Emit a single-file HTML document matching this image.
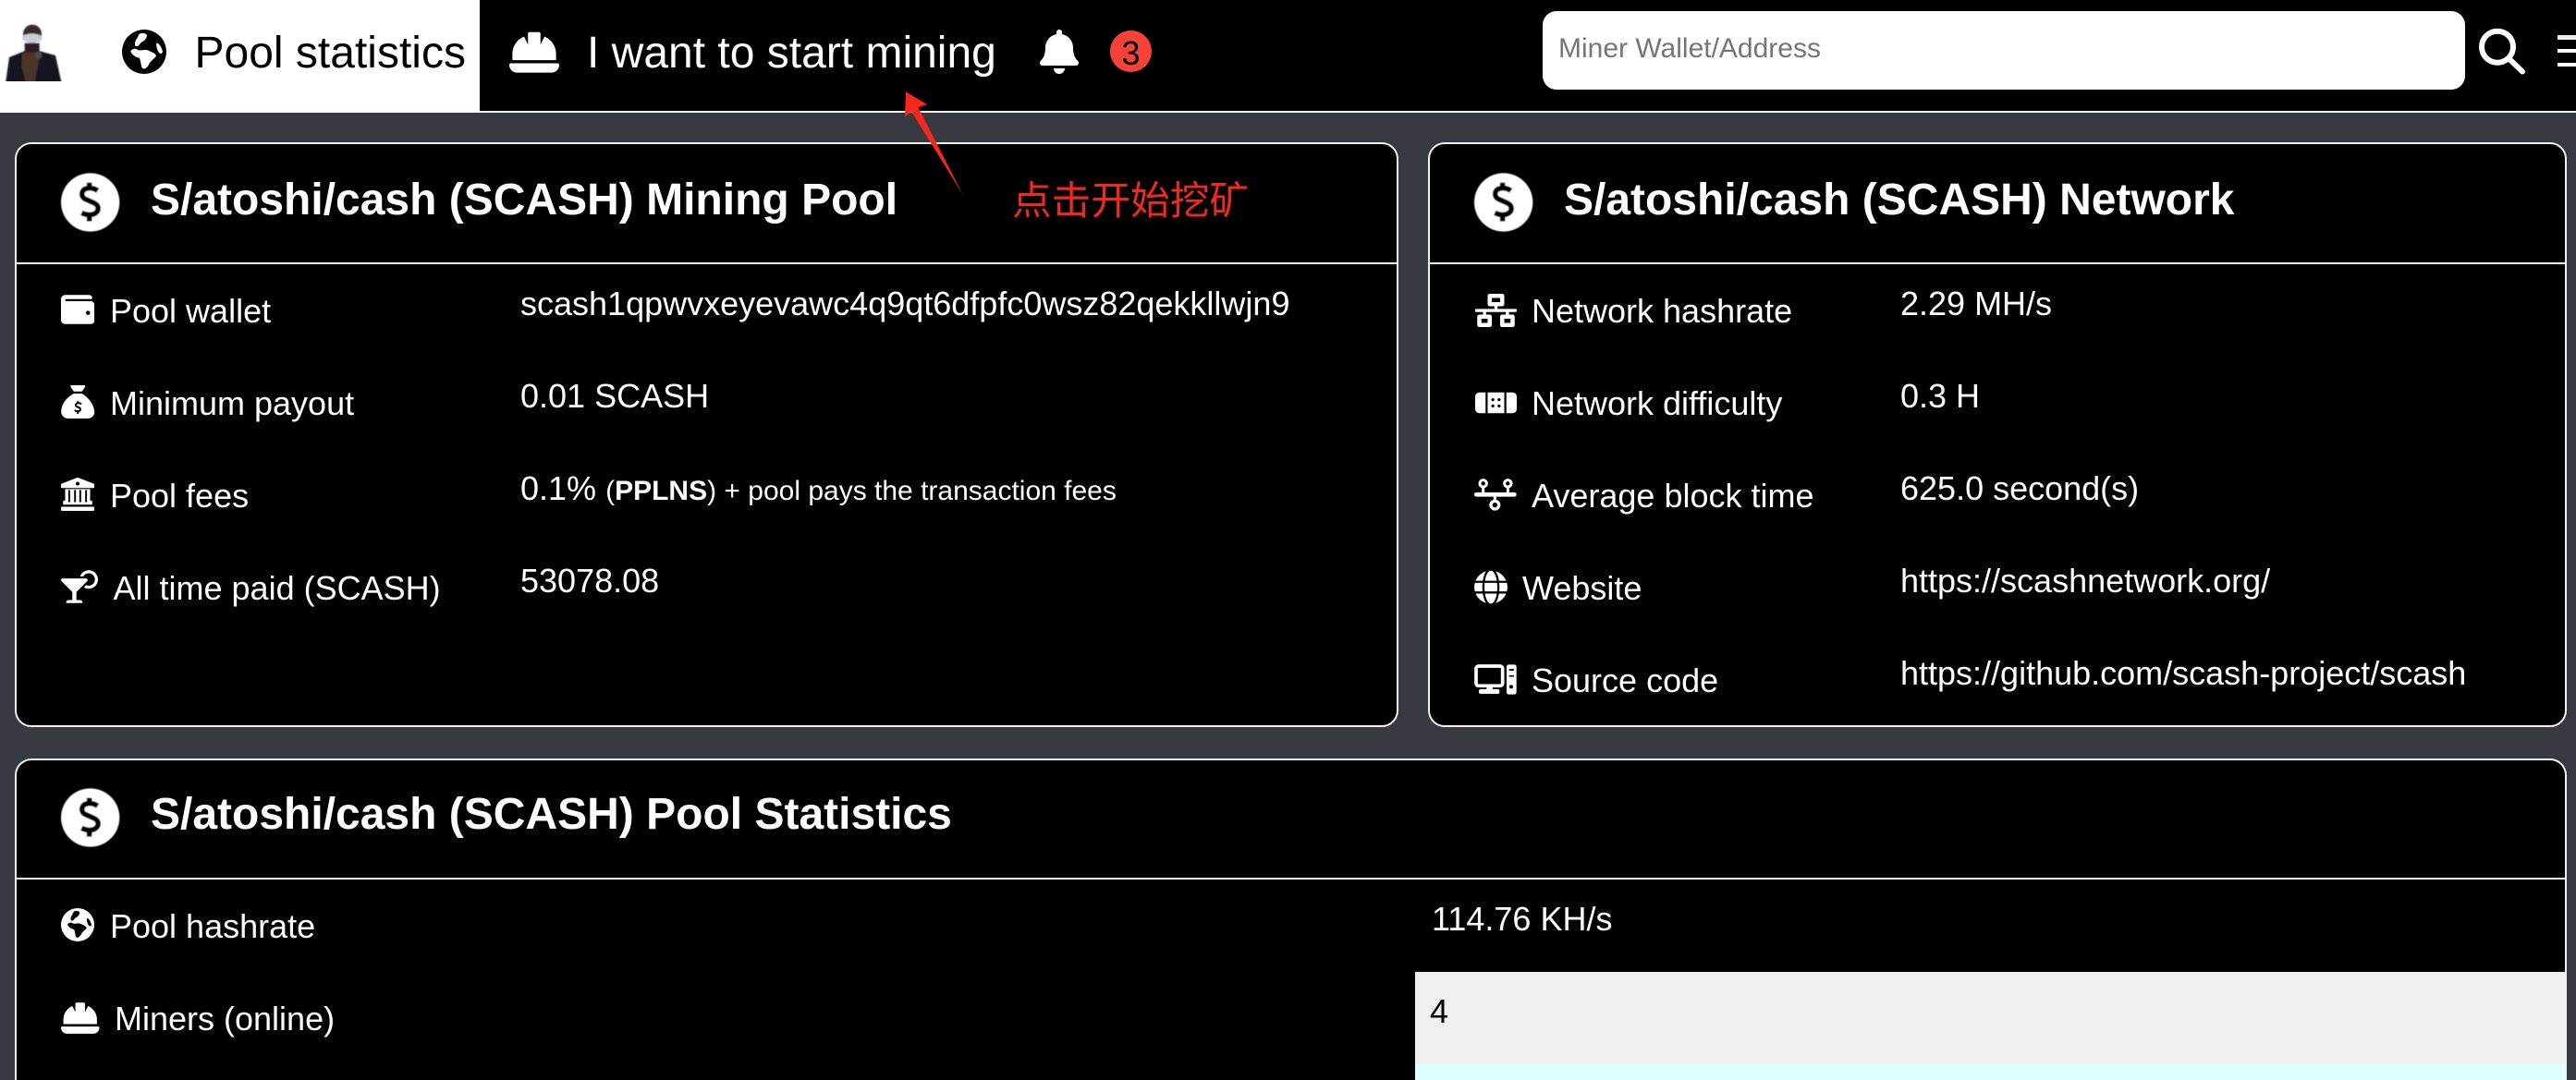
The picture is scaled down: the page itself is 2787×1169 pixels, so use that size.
<!DOCTYPE html>
<html lang="en">
<head>
<meta charset="utf-8">
<title>S/atoshi/cash Mining Pool</title>
<style>
html,body{margin:0;padding:0;width:2787px;height:1169px;overflow:hidden;background:#373b41}
body{position:relative;font-family:"Liberation Sans","Noto Sans CJK SC",sans-serif;color:#fff}
.bar{position:absolute;left:0;top:0;width:2787px;height:122px;background:#000;border-bottom:0}
.line{position:absolute;left:0;top:119.5px;width:2787px;height:2.5px;background:#f4f4f4}
.tab{position:absolute;left:0;top:0;width:519px;height:122px;background:#fff}
.card{position:absolute;box-sizing:border-box;background:#000;border:2px solid #f0f0f0;border-radius:18px}
.div{position:absolute;height:2px;background:#f0f0f0}
.t{position:absolute;white-space:nowrap;line-height:1;font-size:36px;color:#fff}
.h{font-size:48px;font-weight:bold}
.n{font-size:48px}
.i{position:absolute;fill:#fff;display:block}
.s{font-size:30px}
</style>
</head>
<body>
<svg width="0" height="0" style="position:absolute">
<defs>
<filter id="b" x="-10%" y="-10%" width="120%" height="120%"><feGaussianBlur stdDeviation="1.6"/></filter>
<filter id="c" x="-10%" y="-10%" width="120%" height="120%"><feGaussianBlur stdDeviation="2"/></filter>
<symbol id="dollar" viewBox="0 0 270 240">
<g filter="url(#b)">
<circle cx="128" cy="120" r="95" fill="#fff"/>
<path d="M152 82C140 74 125 72 113 76C97 82 97 104 113 110L140 122C158 130 158 150 140 158C127 163 112 160 100 154M125 56V74M125 162V182" fill="none" stroke="#000" stroke-width="17"/>
</g>
</symbol>
<symbol id="gl" viewBox="396 96 144 144"><path fill-rule="evenodd" d="M468 96a72 72 0 1 0 0 144a72 72 0 1 0 0-144zM452 110C462 106 474 108 477 114C476 126 468 134 458 138L448 150L440 150C436 145 438 132 445 124ZM444 160C452 168 470 158 482 164C492 170 504 172 507 182C500 192 488 198 484 208C478 220 470 226 462 222C456 212 458 198 452 188C440 186 426 176 424 166C428 160 438 156 444 160ZM508 140C514 138 524 150 528 168C526 176 518 176 514 168C510 160 506 150 508 140Z"/></symbol>
<symbol id="hat" viewBox="0 0 512 512"><path d="M480 288c0-80.25-49.28-148.92-119.19-177.62L320 192V80a16 16 0 0 0-16-16h-96a16 16 0 0 0-16 16v112l-40.81-81.62C81.28 139.08 32 207.75 32 288v64h448zm16 96H16c-8.84 0-16 7.16-16 16 0 44.18 35.82 80 80 80h352c44.18 0 80-35.82 80-80 0-8.84-7.16-16-16-16z"/></symbol>
</defs>
</svg>

<div class="bar"></div>
<div class="line"></div>
<div class="tab"></div>

<!-- avatar -->
<svg style="position:absolute;left:0;top:0" width="100" height="88" viewBox="0 0 300 264">
<g filter="url(#c)">
<path d="M18 270L30 186L78 166L130 166L180 180L200 270Z" fill="#141822"/>
<path d="M72 170L130 165L125 205L112 270H85L70 215Z" fill="#4a342c"/>
<circle cx="105" cy="110" r="30" fill="#3b2c2b"/>
<ellipse cx="104" cy="124" rx="33" ry="15" fill="#c3d0d3"/>
<rect x="80" y="140" width="48" height="30" fill="#2a1f20"/>
<circle cx="124" cy="180" r="12" fill="#4a4d44"/>
</g>
</svg>

<svg class="i" style="left:132px;top:32px;fill:#000" width="48" height="48"><use href="#gl"/></svg>
<span class="t n" style="left:210.5px;top:34.4px;color:#000">Pool statistics</span>
<svg class="i" style="left:551px;top:28px" width="54" height="54"><use href="#hat"/></svg>
<span class="t n" style="left:635px;top:34.4px">I want to start mining</span>

<svg class="i" style="left:1125px;top:32px" width="42" height="48" viewBox="0 0 448 512"><path d="M224 512c35.32 0 63.97-28.65 63.97-64H160.03c0 35.35 28.65 64 63.97 64zm215.39-149.71c-19.32-20.76-55.47-51.99-55.47-154.29 0-77.7-54.48-139.9-127.94-155.16V32c0-17.67-14.32-32-31.98-32s-31.98 14.33-31.98 32v20.84C118.56 68.1 64.08 130.3 64.08 208c0 102.3-36.15 133.53-55.47 154.29-6 6.45-8.66 14.16-8.61 21.71.11 16.4 12.98 32 32.1 32h383.8c19.12 0 32-15.6 32.1-32 .05-7.55-2.61-15.27-8.61-21.71z"/></svg>
<div style="position:absolute;left:1201px;top:33px;width:45px;height:45px;border-radius:50%;background:#f44336"></div>
<span class="t" style="left:1213.5px;top:40px;color:#000">3</span>

<div style="position:absolute;left:1669px;top:12px;width:998px;height:85px;background:#fff;border-radius:15px"></div>
<span class="t" style="left:1686px;top:38px;font-size:30px;color:#757575">Miner Wallet/Address</span>

<svg style="position:absolute;left:2670px;top:20px" width="70" height="70" viewBox="0 0 70 70">
<circle cx="32" cy="30.7" r="17" fill="none" stroke="#fff" stroke-width="6"/>
<path d="M45 44L59 57.5" stroke="#fff" stroke-width="6" stroke-linecap="round"/>
</svg>
<div style="position:absolute;left:2767px;top:38px;width:20px;height:4.5px;background:#eee"></div>
<div style="position:absolute;left:2767px;top:52.5px;width:20px;height:4.5px;background:#fff"></div>
<div style="position:absolute;left:2767px;top:67.5px;width:20px;height:4.5px;background:#fff"></div>

<!-- Card 1 -->
<div class="card" style="left:16px;top:154px;width:1497px;height:633px"></div>
<div class="div" style="left:18px;top:284px;width:1493px"></div>
<svg style="position:absolute;left:55px;top:179px" width="90" height="80"><use href="#dollar"/></svg>
<span class="t h" style="left:163px;top:192.5px">S/atoshi/cash (SCASH) Mining Pool</span>

<svg class="i" style="left:66px;top:317px" width="36" height="36" viewBox="0 0 512 512"><path d="M461.2 128H80c-8.84 0-16-7.16-16-16s7.16-16 16-16h384c8.84 0 16-7.16 16-16 0-26.51-21.49-48-48-48H64C28.65 32 0 60.65 0 96v320c0 35.35 28.65 64 64 64h397.2c28.02 0 50.8-21.53 50.8-48V176c0-26.47-22.78-48-50.8-48zM416 340c-17.67 0-32-14.33-32-32s14.33-32 32-32 32 14.33 32 32-14.33 32-32 32z"/></svg>
<span class="t" style="left:119px;top:319px">Pool wallet</span>
<span class="t" style="left:563px;top:311px">scash1qpwvxeyevawc4q9qt6dfpfc0wsz82qekkllwjn9</span>

<svg class="i" style="left:66px;top:417px" width="36.5" height="36" viewBox="0 0 512 512"><path d="M192 96h128l47.4-71.12A16 16 0 0 0 354.09 0H157.94a16 16 0 0 0-13.31 24.88zm128 32H192C-10.38 243.4.09 396.64.09 416c0 53 49.11 96 109.71 96h292.4c60.6 0 109.71-43 109.71-96 0-19-9.17-173.13-192-288z"/><path d="M310 290C296 276 270 272 250 276C218 282 214 322 244 332L272 342C302 352 300 394 268 400C248 404 222 398 206 384M256 244V276M256 402V440" fill="none" stroke="#000" stroke-width="28"/></svg>
<span class="t" style="left:119px;top:419px">Minimum payout</span>
<span class="t" style="left:563px;top:411px">0.01 SCASH</span>

<svg class="i" style="left:66px;top:516px" width="36" height="38" viewBox="0 0 512 512"><path d="M501.62 92.11L267.24 2.04a31.958 31.958 0 0 0-22.47 0L10.38 92.11A16.001 16.001 0 0 0 0 107.09V144c0 8.84 7.16 16 16 16h480c8.84 0 16-7.16 16-16v-36.91c0-6.67-4.14-12.64-10.38-14.98zM64 192v160H48c-8.84 0-16 7.16-16 16v48h448v-48c0-8.84-7.16-16-16-16H64zm432 256H16c-8.84 0-16 7.16-16 16v32c0 8.84 7.16 16 16 16h480c8.84 0 16-7.16 16-16v-32c0-8.84-7.16-16-16-16z"/><rect x="64" y="176" width="384" height="190" fill="#fff"/><circle cx="256" cy="92" r="28" fill="#000"/><path d="M126 190V376M216 190V376M296 190V376M386 190V376" stroke="#000" stroke-width="28"/></svg>
<span class="t" style="left:119px;top:519px">Pool fees</span>
<span class="t" style="left:563px;top:511px">0.1% <span class="s">(<b>PPLNS</b>) + pool pays the transaction fees</span></span>

<svg class="i" style="left:66px;top:617px" width="40" height="36" viewBox="0 0 576 512"><path d="M296 464h-56V338.78l168.74-168.73c15.52-15.52 4.53-42.05-17.42-42.05H24.68c-21.95 0-32.94 26.53-17.42 42.05L176 338.78V464h-56c-22.09 0-40 17.91-40 40 0 4.42 3.58 8 8 8h240c4.42 0 8-3.58 8-8 0-22.09-17.91-40-40-40zM432 0c-62.61 0-115.35 40.2-135.18 96h52.54c16.65-28.55 47.27-48 82.64-48 52.93 0 96 43.06 96 96s-43.07 96-96 96c-14.04 0-27.29-3.2-39.32-8.64l-35.26 35.26C379.23 279.92 404.59 288 432 288c79.53 0 144-64.47 144-144S511.53 0 432 0z"/></svg>
<span class="t" style="left:122.5px;top:619px">All time paid (SCASH)</span>
<span class="t" style="left:563px;top:611px">53078.08</span>

<!-- Card 2 -->
<div class="card" style="left:1545px;top:154px;width:1232px;height:633px"></div>
<div class="div" style="left:1547px;top:284px;width:1228px"></div>
<svg style="position:absolute;left:1584px;top:179px" width="90" height="80"><use href="#dollar"/></svg>
<span class="t h" style="left:1692px;top:192.5px">S/atoshi/cash (SCASH) Network</span>

<svg class="i" style="left:1595.5px;top:318px" width="45" height="36" viewBox="0 0 640 512"><path d="M640 264v-16c0-8.84-7.16-16-16-16H344v-40h72c17.67 0 32-14.33 32-32V32c0-17.67-14.33-32-32-32H224c-17.67 0-32 14.33-32 32v128c0 17.67 14.33 32 32 32h72v40H16c-8.84 0-16 7.16-16 16v16c0 8.84 7.16 16 16 16h104v40H64c-17.67 0-32 14.33-32 32v128c0 17.67 14.33 32 32 32h160c17.67 0 32-14.33 32-32V352c0-17.67-14.33-32-32-32h-56v-40h304v40h-56c-17.67 0-32 14.33-32 32v128c0 17.67 14.33 32 32 32h160c17.67 0 32-14.33 32-32V352c0-17.67-14.33-32-32-32h-56v-40h104c8.84 0 16-7.16 16-16zM256 128V64h128v64H256zm-64 320H96v-64h96v64zm352 0h-96v-64h96v64z"/></svg>
<span class="t" style="left:1657px;top:319px">Network hashrate</span>
<span class="t" style="left:2056px;top:311px">2.29 MH/s</span>

<svg class="i" style="left:1595.5px;top:418px" width="45" height="36" viewBox="0 0 640 512"><path d="M0 160v192c0 35.3 28.7 64 64 64h96V96H64c-35.3 0-64 28.7-64 64zm576-64h-96v320h96c35.3 0 64-28.7 64-64V160c0-35.3-28.7-64-64-64zM192 416h256V96H192v320zm176-232c13.3 0 24 10.7 24 24s-10.7 24-24 24-24-10.7-24-24 10.7-24 24-24zm0 96c13.3 0 24 10.7 24 24s-10.7 24-24 24-24-10.7-24-24 10.7-24 24-24zm-96-96c13.3 0 24 10.7 24 24s-10.7 24-24 24-24-10.7-24-24 10.7-24 24-24zm0 96c13.3 0 24 10.7 24 24s-10.7 24-24 24-24-10.7-24-24 10.7-24 24-24z"/></svg>
<span class="t" style="left:1657px;top:419px">Network difficulty</span>
<span class="t" style="left:2056px;top:411px">0.3 H</span>

<svg style="position:absolute;left:1585px;top:510px" width="70" height="60" viewBox="0 600 210 180" fill="none" stroke="#fff">
<path d="M37 676H160" stroke-width="14" stroke-linecap="round"/>
<circle cx="59" cy="640" r="11" stroke-width="9"/>
<circle cx="139" cy="640" r="11" stroke-width="9"/>
<path d="M59 650V676M139 650V676M97 676V697" stroke-width="9"/>
<circle cx="97" cy="710" r="13" stroke-width="10"/>
</svg>
<span class="t" style="left:1657px;top:519px">Average block time</span>
<span class="t" style="left:2056px;top:511px">625.0 second(s)</span>

<svg class="i" style="left:1595px;top:616.5px" width="36" height="37" viewBox="0 0 496 512"><path d="M336.5 160C322 70.7 287.8 8 248 8s-74 62.7-88.5 152h177zM152 256c0 22.2 1.2 43.5 3.3 64h185.3c2.1-20.5 3.3-41.8 3.3-64s-1.2-43.5-3.3-64H155.3c-2.1 20.5-3.3 41.8-3.3 64zm324.7-96c-28.6-67.9-86.5-120.4-158-141.6 24.4 33.8 41.2 84.7 50 141.6h108zM177.2 18.4C105.8 39.6 47.8 92.1 19.3 160h108c8.7-56.9 25.5-107.8 49.9-141.6zM487.4 192H372.7c2.1 21 3.3 42.5 3.3 64s-1.2 43-3.3 64h114.6c5.5-20.5 8.6-41.8 8.6-64s-3.1-43.5-8.5-64zM120 256c0-21.5 1.2-43 3.3-64H8.6C3.2 212.5 0 233.8 0 256s3.2 43.5 8.6 64h114.6c-2-21-3.2-42.5-3.2-64zm39.5 96c14.5 89.3 48.7 152 88.5 152s74-62.7 88.5-152h-177zm159.3 141.6c71.4-21.2 129.4-73.7 158-141.6h-108c-8.8 56.9-25.6 107.8-50 141.6zM19.3 352c28.6 67.9 86.5 120.4 158 141.6-24.4-33.8-41.2-84.7-50-141.6h-108z"/></svg>
<span class="t" style="left:1647px;top:619px">Website</span>
<span class="t" style="left:2056px;top:611px">https://scashnetwork.org/</span>

<svg style="position:absolute;left:1585px;top:710px" width="70" height="50" viewBox="0 1200 210 150">
<rect x="36" y="1233" width="86" height="64" rx="8" fill="none" stroke="#fff" stroke-width="11"/>
<rect x="70" y="1298" width="20" height="14" fill="#fff"/>
<rect x="45" y="1308" width="67" height="15" rx="6" fill="#fff"/>
<rect x="135" y="1228" width="32" height="97" rx="7" fill="#fff"/>
<path d="M143 1245H159M143 1265H159" stroke="#000" stroke-width="5"/>
<circle cx="150" cy="1300" r="6" fill="#000"/>
</svg>
<span class="t" style="left:1657px;top:719px">Source code</span>
<span class="t" style="left:2056px;top:711px">https://github.com/scash-project/scash</span>

<!-- Card 3 -->
<div class="card" style="left:16px;top:821px;width:2761px;height:348px;border-bottom:0;border-radius:18px 18px 0 0"></div>
<div class="div" style="left:18px;top:950px;width:2757px"></div>
<svg style="position:absolute;left:55px;top:845px" width="90" height="80"><use href="#dollar"/></svg>
<span class="t h" style="left:163px;top:857.9px">S/atoshi/cash (SCASH) Pool Statistics</span>

<svg class="i" style="left:66px;top:983px" width="36" height="36"><use href="#gl"/></svg>
<span class="t" style="left:119px;top:984.5px">Pool hashrate</span>
<span class="t" style="left:1549px;top:977px">114.76 KH/s</span>

<svg class="i" style="left:66px;top:1080px" width="41.5" height="41.5"><use href="#hat"/></svg>
<span class="t" style="left:124px;top:1084.5px">Miners (online)</span>
<div style="position:absolute;left:1531px;top:1052px;width:1244px;height:100px;background:#f0f0f0"></div>
<div style="position:absolute;left:1531px;top:1152px;width:1244px;height:17px;background:#dcffff"></div>
<span class="t" style="left:1547px;top:1076.5px;color:#000">4</span>

<!-- annotation -->
<svg style="position:absolute;left:960px;top:90px" width="100" height="130" viewBox="960 90 100 130">
<path d="M980 99.3L1003.3 113.3L993.3 116L1041.7 210.7L986 120.7L979 126.7Z" fill="#f7271e"/>
</svg>
<span class="t" style="left:1095px;top:197px;font-size:42.7px;color:#ee2a1c;font-family:'Liberation Sans','Noto Sans CJK SC',sans-serif">点击开始挖矿</span>
</body>
</html>
